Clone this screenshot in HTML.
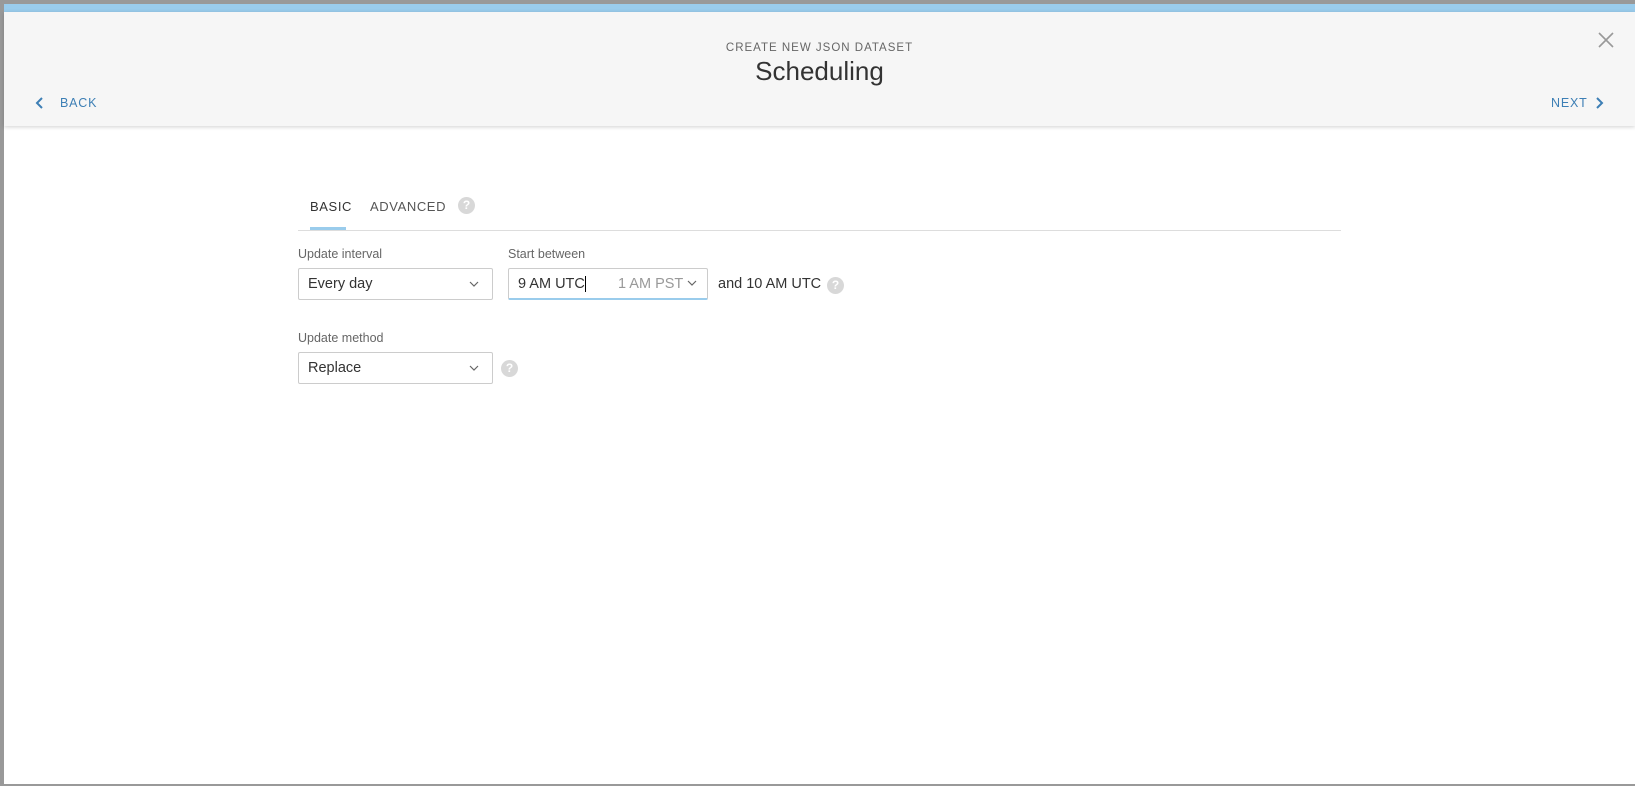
<!DOCTYPE html>
<html><head><style>
*{margin:0;padding:0;box-sizing:border-box}
body{width:1635px;height:786px;background:#999;position:relative;overflow:hidden;font-family:"Liberation Sans",sans-serif;color:#333}
.modal{position:absolute;left:4px;top:4px;width:1631px;height:780px;background:#fff;border-top-left-radius:2px}
.bar{position:absolute;left:0;top:0;width:100%;height:8px;background:#9accec}
.hdr{position:absolute;left:0;top:8px;width:100%;height:114px;background:#f6f6f6;box-shadow:0 1px 4px rgba(0,0,0,.18)}
.abs{position:absolute;white-space:nowrap}
.sel{position:absolute;border:1px solid #ccc;border-radius:2px;height:32px;font-size:14.5px;line-height:30px;padding-left:9px;background:#fff}
.lbl{font-size:12.5px;color:#666}
.q{position:absolute;width:17px;height:17px;border-radius:50%;background:#d8d8d8;color:#fff;font-size:12px;font-weight:bold;text-align:center;line-height:17px}
</style></head><body>
<div class="modal">
<div class="bar"></div>
<div class="hdr">
<div class="abs" style="left:0;width:100%;text-align:center;top:30px;font-size:11.5px;letter-spacing:1px;color:#666">CREATE NEW JSON DATASET</div>
<div class="abs" style="left:0;width:100%;text-align:center;top:44px;font-size:26px;color:#333">Scheduling</div>
<svg class="abs" style="left:31px;top:84px" width="10" height="14"><path d="M7 2L2 7l5 5" fill="none" stroke="#3d7fb5" stroke-width="2"/></svg>
<div class="abs" style="left:56px;top:84px;font-size:12.5px;letter-spacing:.8px;color:#3d7fb5">BACK</div>
<div class="abs" style="left:1547px;top:84px;font-size:12.5px;letter-spacing:.8px;color:#3d7fb5">NEXT</div>
<svg class="abs" style="left:1590px;top:84px" width="10" height="14"><path d="M3 2l5 5-5 5" fill="none" stroke="#3d7fb5" stroke-width="2"/></svg>
<svg class="abs" style="left:1594px;top:20px" width="16" height="16"><path d="M1 1l14 14M15 1L1 15" stroke="#999" stroke-width="1.6"/></svg>
</div>
<div class="abs" style="left:306px;top:195px;font-size:13px;letter-spacing:.6px;color:#333">BASIC</div>
<div class="abs" style="left:366px;top:195px;font-size:13px;letter-spacing:.6px;color:#555">ADVANCED</div>
<div class="q" style="left:454px;top:193px">?</div>
<div class="abs" style="left:294px;top:226px;width:1043px;height:1px;background:#ddd"></div>
<div class="abs" style="left:306px;top:223px;width:36px;height:3px;background:#9accec"></div>
<div class="abs lbl" style="left:294px;top:243px">Update interval</div>
<div class="sel" style="left:294px;top:264px;width:195px">Every day<svg class="abs" style="left:170px;top:12px" width="10" height="7"><path d="M1 1l4 4 4-4" fill="none" stroke="#666" stroke-width="1.2"/></svg></div>
<div class="abs lbl" style="left:504px;top:243px">Start between</div>
<div class="sel" style="left:504px;top:264px;width:200px;border-bottom:2px solid #9accec">9 AM UTC<span style="border-left:1px solid #000;margin-left:0"></span><span class="abs" style="left:109px;color:#999">1 AM PST</span><svg class="abs" style="left:178px;top:11px" width="10" height="7"><path d="M1 1l4 4 4-4" fill="none" stroke="#666" stroke-width="1.2"/></svg></div>
<div class="abs" style="left:714px;top:272px;font-size:14.5px;color:#333">and 10 AM UTC</div>
<div class="q" style="left:823px;top:273px">?</div>
<div class="abs lbl" style="left:294px;top:327px">Update method</div>
<div class="sel" style="left:294px;top:348px;width:195px">Replace<svg class="abs" style="left:170px;top:12px" width="10" height="7"><path d="M1 1l4 4 4-4" fill="none" stroke="#666" stroke-width="1.2"/></svg></div>
<div class="q" style="left:497px;top:356px">?</div>
</div>
</body></html>
